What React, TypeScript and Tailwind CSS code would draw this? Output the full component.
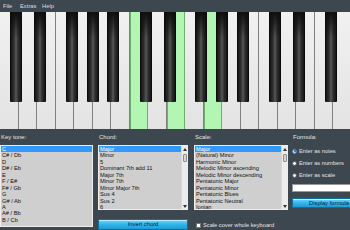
import React from 'react';

const WHITE_W = 18.5;
const OCTAVE_W = WHITE_W * 7;
const BLACK_OFFSETS = [10, 34, 65.5, 86.5, 107];
const HIGHLIGHTED = [7, 9, 11];

const keyTones = ['C', 'C# / Db', 'D', 'D# / Eb', 'E', 'F / E#', 'F# / Gb', 'G', 'G# / Ab', 'A', 'A# / Bb', 'B / Cb'];
const chords = ['Major', 'Minor', '5', 'Dominant 7th add 11', 'Major 7th', 'Minor 7th', 'Minor Major 7th', 'Sus 4', 'Sus 2', '6'];
const scales = [
    'Major',
    '(Natural) Minor',
    'Harmonic Minor',
    'Melodic Minor ascending',
    'Melodic Minor descending',
    'Pentatonic Major',
    'Pentatonic Minor',
    'Pentatonic Blues',
    'Pentatonic Neutral',
    'Ionian',
];

const Keyboard: React.FC = () => {
    const blacks: number[] = [];
    for (let o = 0; o < 3; o++) {
        BLACK_OFFSETS.forEach((off) => {
            const left = o * OCTAVE_W + off;
            if (left < 340) blacks.push(left);
        });
    }
    return (
        <div className="relative h-[117px] flex overflow-hidden bg-[#2a2a2a]">
            {Array.from({ length: 19 }).map((_, i) =>
                HIGHLIGHTED.includes(i) ? (
                    <div
                        key={i}
                        className="w-[18.5px] h-full shrink-0 bg-[#b3f6b3] border-x border-[#6fae6f]"
                    />
                ) : (
                    <div
                        key={i}
                        className="w-[18.5px] h-full shrink-0 bg-gradient-to-b from-[#f1f1f1] to-[#e3e3e3] border-r border-[#808080]"
                    />
                )
            )}
            {/* black keys lie over the white ones */}
            {blacks.map((left, i) => (
                <div
                    key={i}
                    className="absolute top-0 h-[90px] w-[12px] rounded-b-[1px] border-x border-[#0a0a0a] bg-[linear-gradient(to_right,#161616,#303030_30%,#585858_50%,#303030_70%,#161616)]"
                    style={{ left }}
                >
                    <div className="h-[26px] bg-gradient-to-b from-[#0e0e0e] to-transparent" />
                </div>
            ))}
        </div>
    );
};

const ScrollBar: React.FC = () => (
    <div className="w-[6px] h-full bg-[#ececec] border-l border-[#d8d8d8] flex flex-col items-center">
        <div className="h-[6px] flex items-center justify-center">
            <svg width="4" height="3" viewBox="0 0 4 3"><polygon points="2,0 4,3 0,3" fill="#333" /></svg>
        </div>
        <div className="mt-[2px] w-[4px] h-[8px] bg-[#d6d6d6] border border-[#8c8c8c] rounded-[1px]" />
        <div className="flex-1" />
        <div className="h-[6px] flex items-center justify-center">
            <svg width="4" height="3" viewBox="0 0 4 3"><polygon points="0,0 4,0 2,3" fill="#333" /></svg>
        </div>
    </div>
);

const ListBox: React.FC<{ items: string[]; height: string; scroll?: boolean }> = ({ items, height, scroll }) => (
    <div className={`${height} flex bg-[#cfcfcf] border border-[#ededed] overflow-hidden`}>
        <div className="flex-1 overflow-hidden">
            {items.map((item, i) => (
                <div
                    key={item}
                    className={
                        i === 0
                            ? 'h-[6.45px] leading-[6.45px] pl-[1px] text-[5.7px] bg-[#3399ff] text-white whitespace-nowrap'
                            : 'h-[6.45px] leading-[6.45px] pl-[1px] text-[5.7px] text-[#111] whitespace-nowrap'
                    }
                >
                    {item}
                </div>
            ))}
        </div>
        {scroll && <ScrollBar />}
    </div>
);

const BlueButton: React.FC<{ label: string; width: string; height: string }> = ({ label, width, height }) => (
    <div
        className={`${width} ${height} shrink-0 flex items-center justify-center text-[5.8px] text-[#0b1e2a] bg-gradient-to-b from-[#6fd3f7] via-[#33b5ea] to-[#1a9bd6] border border-[#0e6e9c] shadow-[inset_0_1px_0_#b8ecff]`}
    >
        {label}
    </div>
);

const Label: React.FC<{ text: string }> = ({ text }) => (
    <div className="h-[12px] leading-[9px] text-[6px] text-[#e4e4e4] pl-[1px]">{text}</div>
);

const Radio: React.FC<{ label: string; checked?: boolean }> = ({ label, checked }) => (
    <div className="h-[12px] flex items-center gap-[2px]">
        <div
            className={
                checked
                    ? 'w-[5px] h-[5px] rounded-full bg-[#cfe6f7] border border-[#4d86b3] flex items-center justify-center'
                    : 'w-[5px] h-[5px] rounded-full bg-white border border-[#555] flex items-center justify-center'
            }
        >
            {checked && <div className="w-[2px] h-[2px] rounded-full bg-[#1f5c94]" />}
        </div>
        <span className="text-[5.7px] text-[#e4e4e4] whitespace-nowrap">{label}</span>
    </div>
);

export default function App() {
    return (
        <div className="w-[350px] h-[230px] overflow-hidden bg-[#3d4750] flex flex-col font-['Liberation_Sans',Arial,sans-serif]">
            {/* Menu bar */}
            <div className="h-[12px] flex items-center pl-[3px] text-[5.8px] text-[#dedede]">
                <span className="w-[17px]">File</span>
                <span className="w-[22px]">Extras</span>
                <span>Help</span>
            </div>

            <Keyboard />

            {/* Controls */}
            <div className="flex-1 flex items-start pt-[4px]">
                <div className="w-[93px] shrink-0">
                    <Label text="Key tone:" />
                    <ListBox items={keyTones} height="h-[82px]" />
                </div>

                <div className="w-[90px] shrink-0 ml-[5px]">
                    <Label text="Chord:" />
                    <ListBox items={chords} height="h-[65px]" scroll />
                    <div className="mt-[9px]">
                        <BlueButton label="Invert chord" width="w-[90px]" height="h-[11px]" />
                    </div>
                </div>

                <div className="w-[94px] shrink-0 ml-[6px]">
                    <Label text="Scale:" />
                    <ListBox items={scales} height="h-[65px]" scroll />
                    <div className="mt-[11px] flex items-center gap-[2px] pl-[2px]">
                        <div className="w-[5px] h-[5px] bg-white border border-[#777]" />
                        <span className="text-[5.7px] text-[#e4e4e4] whitespace-nowrap">Scale cover whole keyboard</span>
                    </div>
                </div>

                <div className="w-[58px] shrink-0 ml-[4px]">
                    <Label text="Formula:" />
                    <Radio label="Enter as notes" checked />
                    <Radio label="Enter as numbers" />
                    <Radio label="Enter as scale" />
                    <div className="mt-[3px] w-[74px] h-[8px] bg-white border border-[#9a9a9a]" />
                    <div className="mt-[6px]">
                        <BlueButton label="Display formula" width="w-[74px]" height="h-[10px]" />
                    </div>
                </div>
            </div>
        </div>
    );
}
